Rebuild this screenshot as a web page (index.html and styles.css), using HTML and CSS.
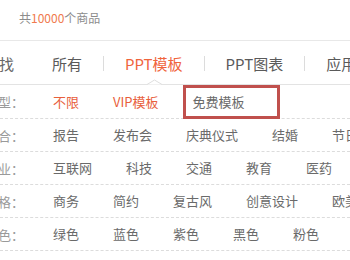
FILE: index.html
```html
<!DOCTYPE html>
<html lang="zh-CN">
<head>
<meta charset="utf-8">
<link rel="stylesheet" href="styles.css">
</head>
<body>
<div class="page">
  <div class="head">共<span class="num">10000</span>个商品</div>
  <div class="tabs">
    <span class="tab-label">查找</span>
    <span class="tab">所有</span>
    <span class="sep"></span>
    <span class="tab active">PPT模板
      <svg class="caret" width="15" height="6" viewBox="0 0 15 6"><polyline points="0,5.5 7.5,1 15,5.5" fill="#fff" stroke="#dedede" stroke-width="1"/></svg>
    </span>
    <span class="sep"></span>
    <span class="tab">PPT图表</span>
    <span class="sep"></span>
    <span class="tab">应用文档</span>
  </div>
  <div class="row first">
    <span class="label">类型：</span>
    <span class="item hot">不限</span>
    <span class="item hot">VIP模板</span>
    <span class="item boxed">免费模板<span class="mark"></span></span>
  </div>
  <div class="row">
    <span class="label">场合：</span>
    <span class="item">报告</span>
    <span class="item">发布会</span>
    <span class="item">庆典仪式</span>
    <span class="item">结婚</span>
    <span class="item">节日</span>
  </div>
  <div class="row">
    <span class="label">行业：</span>
    <span class="item">互联网</span>
    <span class="item">科技</span>
    <span class="item">交通</span>
    <span class="item">教育</span>
    <span class="item">医药</span>
  </div>
  <div class="row">
    <span class="label">风格：</span>
    <span class="item">商务</span>
    <span class="item">简约</span>
    <span class="item">复古风</span>
    <span class="item">创意设计</span>
    <span class="item">欧美</span>
  </div>
  <div class="row">
    <span class="label">颜色：</span>
    <span class="item">绿色</span>
    <span class="item">蓝色</span>
    <span class="item">紫色</span>
    <span class="item">黑色</span>
    <span class="item">粉色</span>
  </div>
</div>
</body>
</html>
```

FILE: styles.css
```css
html, body {
  margin: 0;
  padding: 0;
  background: #fff;
}
body {
  width: 350px;
  height: 260px;
  overflow: hidden;
  font-family: "Noto Sans CJK SC", "Noto Sans", sans-serif;
}
.page {
  width: 350px;
  overflow: hidden;
}
.head {
  height: 40px;
  line-height: 36px;
  padding-left: 19px;
  font-size: 12px;
  color: #8c8c8c;
  border-bottom: 1px solid #e8e8e8;
  white-space: nowrap;
}
.num {
  color: #f07a4e;
}
.tabs {
  height: 41px;
  padding-top: 2px;
  display: flex;
  align-items: stretch;
  border-bottom: 1px solid #e3e3e3;
  white-space: nowrap;
  font-size: 15px;
  color: #5a5a5a;
}
.tab-label {
  display: flex;
  align-items: center;
  margin-left: -16px;
  margin-right: 17px;
  color: #666;
}
.tab {
  position: relative;
  display: flex;
  align-items: center;
  padding: 0 21px;
  flex: none;
}
.tab.active {
  color: #f0643c;
}
.caret {
  position: absolute;
  left: 50%;
  margin-left: -7px;
  bottom: -1px;
  display: block;
}
.sep {
  flex: none;
  align-self: center;
  width: 1px;
  height: 15px;
  background: #dcdcdc;
}
.row {
  height: 32px;
  display: flex;
  align-items: center;
  border-bottom: 1px dashed #dcdcdc;
  white-space: nowrap;
  font-size: 13px;
  color: #6a6a6a;
}
.row.first {
  height: 33px;
}
.label {
  flex: none;
  width: 39px;
  margin-left: -15px;
  margin-right: 29px;
  text-align: right;
  color: #9a9a9a;
}
.item {
  flex: none;
  margin-right: 34px;
  line-height: 20px;
}
.item.hot {
  color: #e8603c;
}
.boxed {
  position: relative;
}
.mark {
  position: absolute;
  left: -10px;
  right: -35px;
  top: -7px;
  bottom: -7px;
  border: 3px solid #c0504d;
}
```
